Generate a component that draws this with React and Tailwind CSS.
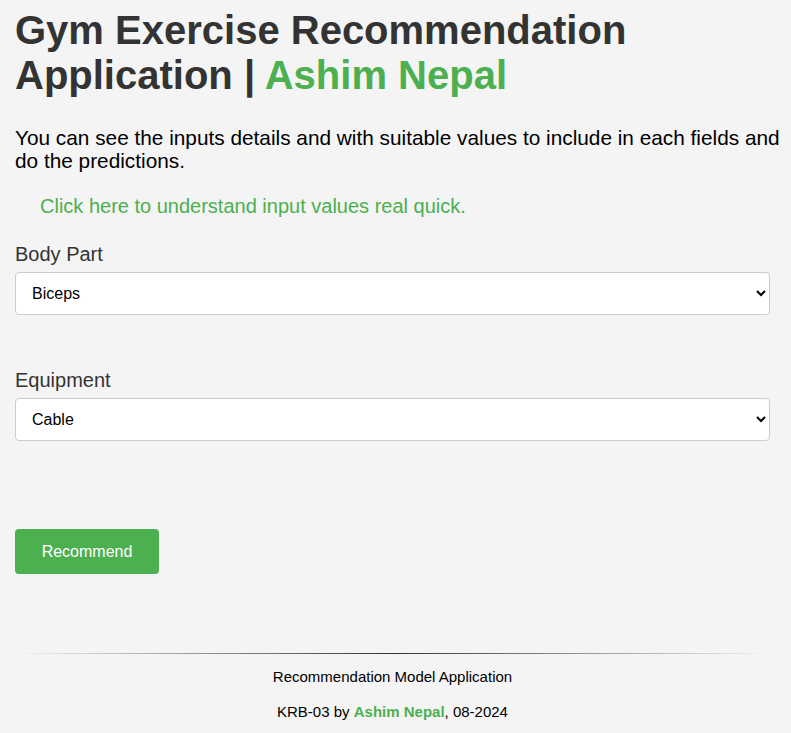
import React from "react";

export default function App() {
  return (
    <div className="min-h-[733px] bg-[#f4f4f4] font-['Liberation_Sans',Arial,sans-serif]">
      <div className="px-[15px] pt-[8px]">
        <h1 className="text-[40px] leading-[45px] font-bold text-[#333]">
          Gym Exercise Recommendation Application | <span className="text-[#4CAF50]">Ashim Nepal</span>
        </h1>
        <p className="mt-[28px] -mr-[10px] text-[20.8px] leading-[23px] text-black">
          You can see the inputs details and with suitable values to include in each fields and do the predictions.
        </p>
        <p className="mt-[23px] pl-[25px] text-[20px] leading-[23px] text-[#4CAF50]">
          Click here to understand input values real quick.
        </p>
        <div className="mt-[25px] mr-[6px]">
          <label className="block text-[20px] leading-[23px] text-[#333]">Body Part</label>
          <select className="mt-[6px] block w-full h-[43px] rounded-[4px] border border-[#ccc] bg-white px-[12px] text-[16px] text-black">
            <option>Biceps</option>
          </select>
        </div>
        <div className="mt-[54px] mr-[6px]">
          <label className="block text-[20px] leading-[23px] text-[#333]">Equipment</label>
          <select className="mt-[6px] block w-full h-[43px] rounded-[4px] border border-[#ccc] bg-white px-[12px] text-[16px] text-black">
            <option>Cable</option>
          </select>
        </div>
        <button className="mt-[88px] h-[45px] w-[144px] rounded-[4px] bg-[#4CAF50] text-[16px] text-white">
          Recommend
        </button>
        <div className="mt-[79px] mr-[6px] h-px bg-gradient-to-r from-transparent via-[#333] to-transparent" />
        <div className="mr-[6px] pt-[14px] text-center text-[15px] leading-[17px] text-black">
          <p>Recommendation Model Application</p>
          <p className="mt-[18px]">
            KRB-03 by <span className="font-bold text-[#4CAF50]">Ashim Nepal</span>, 08-2024
          </p>
        </div>
      </div>
    </div>
  );
}
